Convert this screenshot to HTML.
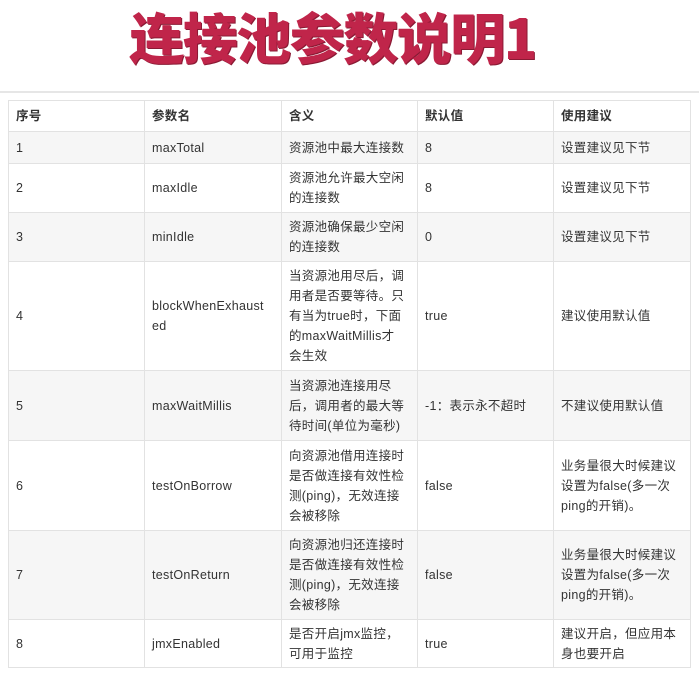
<!DOCTYPE html>
<html><head><meta charset="utf-8"><style>
body{margin:0;width:699px;height:675px;background:#fff;overflow:hidden;font-family:"Liberation Sans","Noto Sans CJK SC",sans-serif;}
h1{position:absolute;left:0;width:699px;top:1px;margin:0;text-align:center;font-size:55px;line-height:68px;color:#c0254a;font-weight:900;font-family:"Noto Sans CJK SC",sans-serif;letter-spacing:-1.5px;padding-right:34px;box-sizing:border-box;text-shadow:1px 1px 0 #8a1a34;}
.hr{position:absolute;left:0;top:91px;width:699px;height:2px;background:#e6e6e6;}
table{position:absolute;left:8px;top:100px;border-collapse:collapse;table-layout:fixed;width:682px;}
td{border:1px solid #e2e2e2;padding:0 7px;font-size:12.5px;line-height:20px;color:#333;white-space:nowrap;vertical-align:middle;letter-spacing:0.3px;}
tr.g td{background:#f6f6f6;}
tr.h td{font-weight:bold;color:#333;}
</style></head><body>
<h1>连接池参数说明1</h1>
<div class="hr"></div>
<table>
<colgroup><col style="width:136px"><col style="width:137px"><col style="width:136px"><col style="width:136px"><col style="width:137px"></colgroup>
<tr class="h" style="height:31px"><td>序号</td><td>参数名</td><td>含义</td><td>默认值</td><td>使用建议</td></tr>
<tr class="g" style="height:32px"><td>1</td><td>maxTotal</td><td>资源池中最大连接数</td><td>8</td><td>设置建议见下节</td></tr>
<tr style="height:49px"><td>2</td><td>maxIdle</td><td>资源池允许最大空闲<br>的连接数</td><td>8</td><td>设置建议见下节</td></tr>
<tr class="g" style="height:49px"><td>3</td><td>minIdle</td><td>资源池确保最少空闲<br>的连接数</td><td>0</td><td>设置建议见下节</td></tr>
<tr style="height:109px"><td>4</td><td>blockWhenExhaust<br>ed</td><td>当资源池用尽后，调<br>用者是否要等待。只<br>有当为true时，下面<br>的maxWaitMillis才<br>会生效</td><td>true</td><td>建议使用默认值</td></tr>
<tr class="g" style="height:70px"><td>5</td><td>maxWaitMillis</td><td>当资源池连接用尽<br>后，调用者的最大等<br>待时间(单位为毫秒)</td><td>-1：表示永不超时</td><td>不建议使用默认值</td></tr>
<tr style="height:90px"><td>6</td><td>testOnBorrow</td><td>向资源池借用连接时<br>是否做连接有效性检<br>测(ping)，无效连接<br>会被移除</td><td>false</td><td>业务量很大时候建议<br>设置为false(多一次<br>ping的开销)。</td></tr>
<tr class="g" style="height:89px"><td>7</td><td>testOnReturn</td><td>向资源池归还连接时<br>是否做连接有效性检<br>测(ping)，无效连接<br>会被移除</td><td>false</td><td>业务量很大时候建议<br>设置为false(多一次<br>ping的开销)。</td></tr>
<tr style="height:48px"><td>8</td><td>jmxEnabled</td><td>是否开启jmx监控，<br>可用于监控</td><td>true</td><td>建议开启，但应用本<br>身也要开启</td></tr>
</table>
</body></html>
